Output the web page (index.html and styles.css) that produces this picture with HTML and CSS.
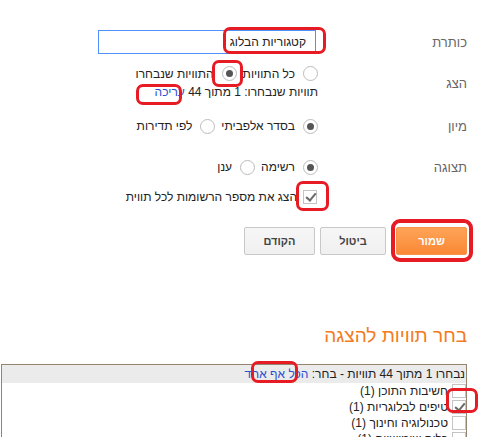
FILE: index.html
```html
<!DOCTYPE html>
<html lang="he" dir="rtl">
<head>
    <meta charset="UTF-8">
    <title>תוויות</title>
    <link rel="stylesheet" href="styles.css">
</head>
<body>
<div class="page">

    <form class="settings">
        <div class="row row-title">
            <label class="field-label" for="title">כותרת</label>
            <div class="field">
                <input type="text" id="title" class="title-input" value="קטגוריות הבלוג">
            </div>
        </div>

        <div class="row row-show">
            <div class="field-label">הצג</div>
            <div class="field">
                <div class="opts">
                    <label class="opt"><input type="radio" name="show">כל התוויות</label>
                    <label class="opt"><input type="radio" name="show" checked>התוויות שנבחרו</label>
                </div>
                <div class="sub">תוויות שנבחרו: 1 מתוך 44 <a href="#" class="link">עריכה</a></div>
            </div>
        </div>

        <div class="row row-sort">
            <div class="field-label">מיון</div>
            <div class="field opts">
                <label class="opt"><input type="radio" name="sort" checked>בסדר אלפביתי</label>
                <label class="opt"><input type="radio" name="sort">לפי תדירות</label>
            </div>
        </div>

        <div class="row row-view">
            <div class="field-label">תצוגה</div>
            <div class="field opts">
                <label class="opt"><input type="radio" name="view" checked>רשימה</label>
                <label class="opt"><input type="radio" name="view">ענן</label>
            </div>
        </div>

        <div class="row row-count">
            <div class="field-label"></div>
            <div class="field opts">
                <label class="opt"><input type="checkbox" checked>הצג את מספר הרשומות לכל תווית</label>
            </div>
        </div>
    </form>

    <div class="actions">
        <button class="btn btn-save">שמור</button>
        <button class="btn btn-cancel">ביטול</button>
        <button class="btn btn-prev">הקודם</button>
    </div>

    <h2 class="section-title">בחר תוויות להצגה</h2>

    <div class="labels-box">
        <div class="labels-head">נבחרו 1 מתוך 44 תוויות - בחר: <a href="#" class="link">הכל</a> <a href="#" class="link">אף אחד</a></div>
        <ul class="labels-list">
            <li><input type="checkbox"><span>חשיבות התוכן (1)</span></li>
            <li><input type="checkbox" checked><span>טיפים לבלוגריות (1)</span></li>
            <li><input type="checkbox"><span>טכנולוגיה וחינוך (1)</span></li>
            <li><input type="checkbox"><span>כלים שימושיים (1)</span></li>
        </ul>
    </div>

    <!-- סימונים אדומים -->
    <div class="mark mark-title"></div>
    <div class="mark mark-radio"></div>
    <div class="mark mark-edit"></div>
    <div class="mark mark-count"></div>
    <div class="mark mark-save"></div>
    <div class="mark mark-none"></div>
    <div class="mark mark-check"></div>
</div>
</body>
</html>
```

FILE: styles.css
```css
body {
    margin: 0;
    font-family: "Liberation Sans", Arial, sans-serif;
    font-size: 12px;
    color: #222;
    background: #fff;
}
.page {
    position: relative;
    width: 484px;
    height: 437px;
    overflow: hidden;
    direction: rtl;
}
.settings {
    padding-top: 30px;
}
.row {
    display: flex;
    align-items: center;
}
.field-label {
    flex: none;
    width: 149px;
    padding-right: 17px;
    font-size: 13px;
    color: #666;
}
.field {
    flex: 1;
}
.row-title {
    height: 24px;
}
.title-input {
    box-sizing: border-box;
    width: 218px;
    height: 24px;
    margin: 0 2px 0 0;
    padding: 0 9px;
    border: 1px solid #4d90fe;
    font-family: inherit;
    font-size: 12px;
    color: #222;
    outline: none;
}
.row-show {
    margin-top: 10px;
}
.opts {
    display: flex;
    align-items: center;
    height: 19px;
}
.opt {
    display: flex;
    align-items: center;
    margin-left: 6px;
}
.sub {
    height: 19px;
    line-height: 19px;
}
.row-sort {
    margin-top: 14px;
    height: 20px;
}
.row-view {
    margin-top: 21px;
    height: 20px;
}
.row-count {
    margin-top: 10px;
    height: 20px;
}
.row-count .opt input {
    margin-right: 1px;
}
.link {
    color: #2a4fd0;
    text-decoration: none;
}

input[type="radio"] {
    appearance: none;
    -webkit-appearance: none;
    box-sizing: border-box;
    width: 15px;
    height: 15px;
    margin: 0 0 0 8px;
    border: 1px solid #bcbcbc;
    border-radius: 50%;
    background: #fff;
    display: grid;
    place-content: center;
}
input[type="radio"]:checked::before {
    content: "";
    display: block;
    width: 7px;
    height: 7px;
    border-radius: 50%;
    background: #555;
}
input[type="checkbox"] {
    appearance: none;
    -webkit-appearance: none;
    box-sizing: border-box;
    width: 14px;
    height: 14px;
    margin: 0 0 0 6px;
    border: 1px solid #c4c4c4;
    background: #fff;
    position: relative;
    flex: none;
}
input[type="checkbox"]:checked::before {
    content: "";
    position: absolute;
    left: 4px;
    top: 0px;
    width: 4px;
    height: 8px;
    border-right: 2px solid #6a6a6a;
    border-bottom: 2px solid #6a6a6a;
    transform: rotate(40deg);
}

.actions {
    display: flex;
    padding-right: 17px;
    margin-top: 20px;
}
.btn {
    box-sizing: border-box;
    height: 28px;
    padding: 0;
    border: 1px solid #c8c8c8;
    border-radius: 2px;
    background: linear-gradient(#f6f6f6, #f0f0f0);
    color: #444;
    font-family: inherit;
    font-size: 11px;
    font-weight: bold;
}
.btn-save {
    width: 71px;
    margin-left: 10px;
    border-color: #f7934a;
    background: linear-gradient(#fea457, #fa8836);
    color: #fff;
}
.btn-cancel {
    width: 66px;
    margin-left: 5px;
}
.btn-prev {
    width: 71px;
}

.section-title {
    margin: 69px 0 0;
    padding-right: 17px;
    font-size: 19px;
    line-height: 24px;
    font-weight: normal;
    color: #f47a20;
}
.labels-box {
    width: 464px;
    margin: 16px 17px 0 0;
    border: 1px solid #948470;
    height: 100px;
}
.labels-head {
    height: 18px;
    line-height: 18px;
    padding-right: 1px;
    background: #ebebeb;
}
.labels-list {
    list-style: none;
    margin: 0;
    padding: 0;
}
.labels-list li {
    display: flex;
    align-items: center;
    height: 16px;
    line-height: 16px;
}
.labels-list input[type="checkbox"] {
    margin: 0 0 0 4px;
}

.mark {
    position: absolute;
    box-sizing: border-box;
    border: 3px solid #e61b23;
    border-radius: 7px;
}
.mark-title { left: 223px; top: 27px; width: 103px; height: 27px; }
.mark-radio { left: 212px; top: 60px; width: 31px; height: 27px; }
.mark-edit { left: 136px; top: 84px; width: 46px; height: 21px; }
.mark-count { left: 296px; top: 181px; width: 33px; height: 30px; }
.mark-save { left: 391px; top: 219px; width: 82px; height: 43px; border-width: 4px; border-radius: 9px; }
.mark-none { left: 251px; top: 361px; width: 47px; height: 22px; }
.mark-check { left: 446px; top: 388px; width: 32px; height: 25px; }
```
